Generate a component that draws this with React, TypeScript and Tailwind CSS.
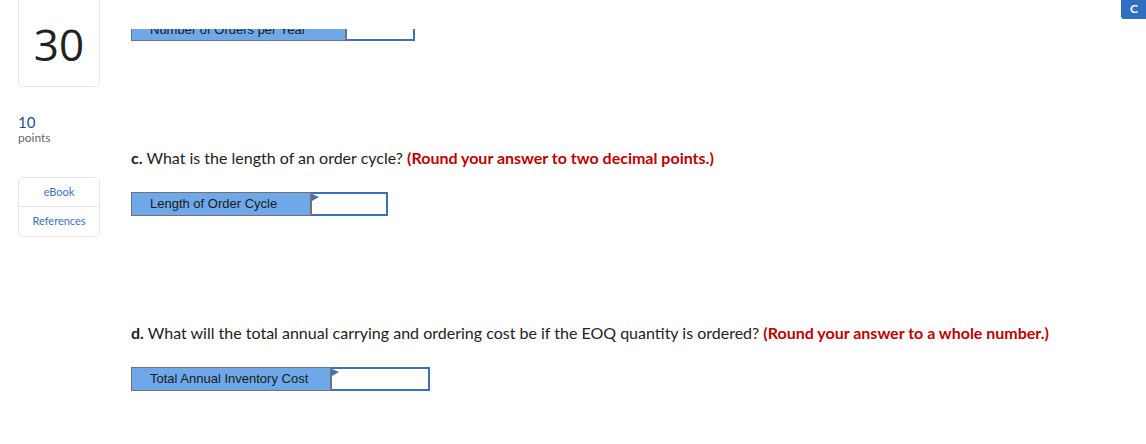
import React from "react";

const Flag = () => (
  <svg className="absolute left-0 top-0" width="7" height="7" viewBox="0 0 7 7">
    <polygon points="0,0 7,3 0,7" fill="#3b73c4" />
  </svg>
);

function Row({ label, labelW, inputW }: { label: string; labelW: string; inputW: string }) {
  return (
    <div className="flex h-[24px]">
      <div
        className={`${labelW} h-full bg-[#6fa8e8] border border-[#727272] flex items-center pl-[18px] text-[13px] text-[#1a1a1a]`}
        style={{ fontFamily: '"Liberation Sans", Arial, sans-serif' }}
      >
        {label}
      </div>
      <div className={`${inputW} relative h-full border-2 border-[#3d70b8] border-l-[#727272] border-l bg-white`}>
        <Flag />
      </div>
    </div>
  );
}

export default function App() {
  return (
    <div className="relative w-[1146px] h-[444px] bg-white overflow-hidden" style={{ fontFamily: 'Lato, "Open Sans", sans-serif' }}>
      <div className="flex">
        <div className="w-[131px] pl-[18px] shrink-0">
          <div className="w-[82px] h-[97px] -mt-[10px] rounded-[6px] border border-[#e6e6e6] flex items-center justify-center pt-[10px]">
            <span className="text-[44px] font-normal text-[#222] leading-none" style={{ fontFamily: '"Open Sans", sans-serif' }}>30</span>
          </div>
          <div className="mt-[26px] text-[15px] leading-[18px] text-[#1c4f91]">10</div>
          <div className="text-[12px] leading-[14px] text-[#666]">points</div>
          <div className="mt-[32px] w-[82px] rounded-[5px] border border-[#e6e6e6] text-[11px] text-[#3a72bf]">
            <div className="h-[29px] flex items-center justify-center border-b border-[#e6e6e6]">eBook</div>
            <div className="h-[29px] flex items-center justify-center">References</div>
          </div>
        </div>
        <div className="flex-1 pt-[29px]">
          <div className="h-[12px] overflow-hidden">
            <div className="-mt-[10px] flex h-[22px]">
              <div
                className="w-[215px] h-full bg-[#6fa8e8] border border-[#727272] flex items-center pl-[18px] text-[13px] leading-[14px] text-[#1a1a1a]"
                style={{ fontFamily: '"Liberation Sans", Arial, sans-serif' }}
              >
                Number of Orders per Year
              </div>
              <div className="w-[69px] h-full border-2 border-[#3d70b8] border-l-[#727272] border-l bg-white" />
            </div>
          </div>
          <p className="mt-[107px] text-[16px] leading-[20px] text-[#222]">
            <b>c.</b> What is the length of an order cycle?{" "}
            <b className="text-[#c00000]">(Round your answer to two decimal points.)</b>
          </p>
          <div className="mt-[24px]">
            <Row label="Length of Order Cycle" labelW="w-[180px]" inputW="w-[77px]" />
          </div>
          <p className="mt-[107px] text-[16px] leading-[20px] text-[#222]">
            <b>d.</b> What will the total annual carrying and ordering cost be if the EOQ quantity is ordered?{" "}
            <b className="text-[#c00000]">(Round your answer to a whole number.)</b>
          </p>
          <div className="mt-[24px]">
            <Row label="Total Annual Inventory Cost" labelW="w-[200px]" inputW="w-[99px]" />
          </div>
        </div>
      </div>
      <div className="absolute right-0 top-0 w-[25px] h-[19px] bg-[#2f6fc2] rounded-bl-[3px] overflow-hidden text-white text-[12px] font-bold pl-[9px] leading-[17px]">
        C
      </div>
    </div>
  );
}
